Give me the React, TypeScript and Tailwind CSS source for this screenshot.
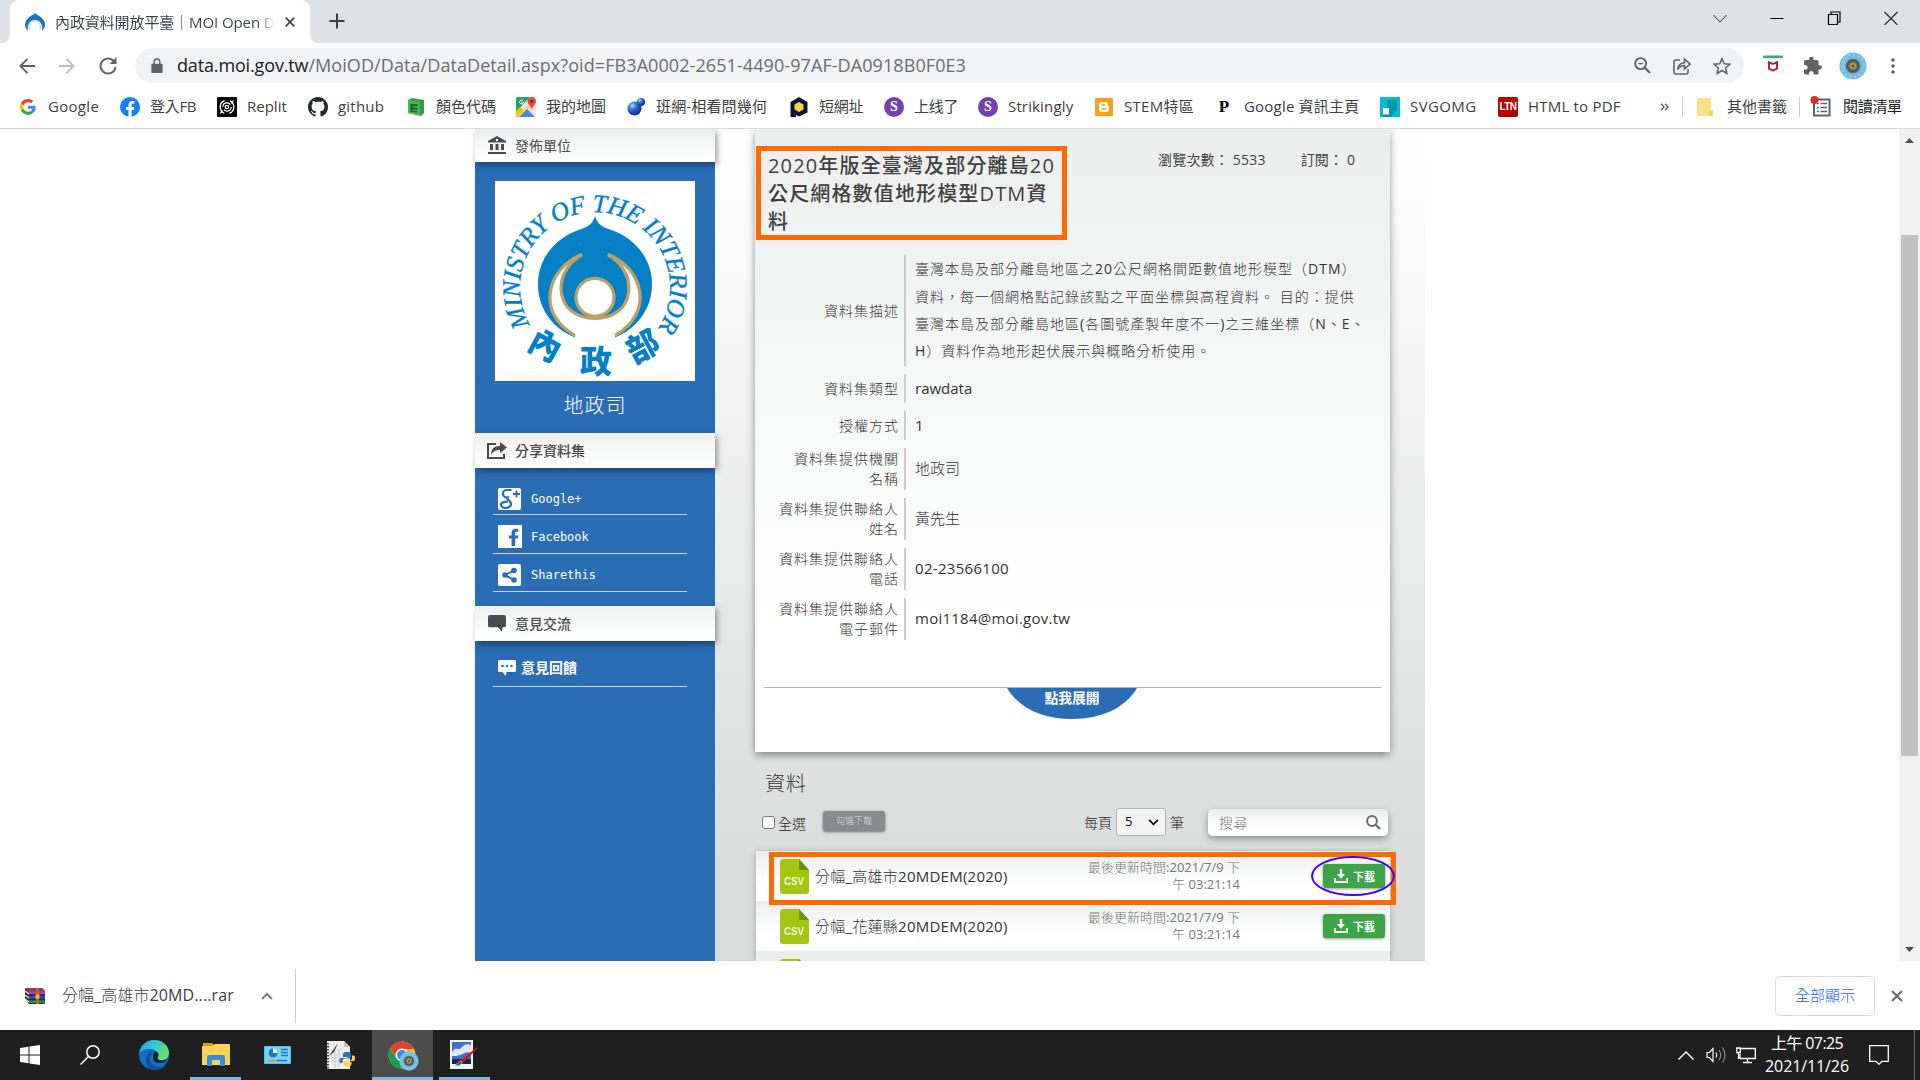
import React from "react";
import type { ReactNode } from "react";

type BookmarkItem = { label: string; slot: string; icon: ReactNode; text?: string };

const bookmarks: BookmarkItem[] = [
  { label: "Google", slot: "w-[102px]", icon: <GoogleIcon />, text: "tracking-[0.3px]" },
  { label: "登入FB", slot: "w-[97px]", icon: <FacebookRound />, text: "tracking-[-0.3px]" },
  { label: "Replit", slot: "w-[91px]", icon: <ReplitIcon /> },
  { label: "github", slot: "w-[98px]", icon: <GithubIcon />, text: "tracking-[0.2px]" },
  { label: "顏色代碼", slot: "w-[110px]", icon: <ColorCodeIcon /> },
  { label: "我的地圖", slot: "w-[110px]", icon: <MapsIcon /> },
  { label: "班網-相看問幾何", slot: "w-[163px]", icon: <BallIcon />, text: "tracking-[0.15px]" },
  { label: "短網址", slot: "w-[95px]", icon: <HexIcon />, text: "tracking-[-0.2px]" },
  { label: "上线了", slot: "w-[94px]", icon: <StrikinglyIcon />, text: "tracking-[-0.2px]" },
  { label: "Strikingly", slot: "w-[116px]", icon: <StrikinglyIcon />, text: "tracking-[0.15px]" },
  { label: "STEM特區", slot: "w-[120px]", icon: <BloggerIcon />, text: "tracking-[0.3px]" },
  { label: "Google 資訊主頁", slot: "w-[166px]", icon: <span className="font-['Liberation_Serif',serif] text-[17px] font-bold text-black">P</span>, text: "tracking-[0.2px]" },
  { label: "SVGOMG", slot: "w-[118px]", icon: <SvgomgIcon />, text: "tracking-[0.4px]" },
  { label: "HTML to PDF", slot: "w-[150px]", icon: <LtnIcon />, text: "tracking-[0.2px]" },
];

function GoogleIcon() {
  return (
    <svg viewBox="0 0 48 48" className="size-4">
      <path fill="#EA4335" d="M24 9.5c3.5 0 6.7 1.2 9.2 3.6l6.9-6.9C35.9 2.4 30.5 0 24 0 14.6 0 6.5 5.4 2.6 13.2l8 6.2C12.4 13.7 17.7 9.5 24 9.5z" />
      <path fill="#4285F4" d="M47 24.6c0-1.6-.2-3.100-.4-4.600H24v9h12.900c-.6 3-2.200 5.500-4.800 7.200l7.700 6C44.400 38 47 31.800 47 24.600z" />
      <path fill="#FBBC05" d="M10.500 28.600c-.5-1.500-.8-3-.8-4.600s.3-3.100.8-4.600l-8-6.200C.9 16.500 0 20.100 0 24s.9 7.500 2.600 10.800l7.900-6.200z" />
      <path fill="#34A853" d="M24 48c6.500 0 11.900-2.100 15.900-5.800l-7.700-6c-2.200 1.500-4.900 2.300-8.200 2.300-6.300 0-11.600-4.200-13.500-9.900l-8 6.200C6.500 42.600 14.600 48 24 48z" />
    </svg>
  );
}

function FacebookRound() {
  return (
    <svg viewBox="0 0 24 24" className="size-5">
      <circle cx="12" cy="12" r="12" fill="#0f83f3" />
      <path fill="#fff" d="M16.700 15.500l.5-3.500h-3.300V9.800c0-1 .5-1.900 2-1.900h1.500v-3s-1.400-.2-2.700-.2c-2.700 0-4.500 1.600-4.500 4.600V12h-3v3.500h3V24h3.700v-8.500z" />
    </svg>
  );
}

function ReplitIcon() {
  return (
    <svg viewBox="0 0 20 20" className="size-5">
      <rect width="20" height="20" rx="1" fill="#000" />
      <g fill="none" stroke="#fff" strokeWidth="1.300">
        <circle cx="10" cy="10" r="1.700" />
        <circle cx="10" cy="10" r="4.200" strokeDasharray="10 3.200" />
        <circle cx="10" cy="10" r="6.800" strokeDasharray="16 5.360" strokeDashoffset="8" />
        <path d="M14.500 6.500l2-3M5.500 13.500l-2 3" />
      </g>
    </svg>
  );
}

function GithubIcon() {
  return (
    <svg viewBox="0 0 16 16" className="size-5">
      <path fill="#24292f" d="M8 0C3.580 0 0 3.580 0 8c0 3.540 2.290 6.530 5.470 7.590.4.070.55-.17.55-.38 0-.19-.01-.82-.01-1.490-2.010.37-2.530-.49-2.690-.94-.09-.23-.48-.94-.82-1.130-.28-.15-.68-.52-.01-.53.63-.01 1.080.58 1.230.82.72 1.210 1.870.87 2.330.66.070-.52.28-.87.510-1.070-1.780-.2-3.640-.89-3.640-3.950 0-.87.310-1.590.82-2.150-.08-.2-.36-1.020.08-2.120 0 0 .67-.21 2.200.82.64-.18 1.320-.27 2-.27s1.360.09 2 .27c1.530-1.040 2.200-.82 2.200-.82.44 1.100.16 1.920.08 2.120.51.560.82 1.270.82 2.150 0 3.070-1.870 3.750-3.650 3.950.29.25.54.73.54 1.480 0 1.070-.01 1.930-.01 2.200 0 .21.15.46.55.38A8 8 0 0 0 16 8c0-4.420-3.580-8-8-8z" />
    </svg>
  );
}

function ColorCodeIcon() {
  return (
    <svg viewBox="0 0 18 18" className="h-[18px] w-[18px]">
      <path d="M1 2l4-2 12 2v13l-3 3-13-3z" fill="#2f9e44" />
      <path d="M1 2l12 2v13l-12-2z" fill="#4bb552" />
      <path d="M3.500 5.500l7 1v2l-5-.7v1.400l5 .7v2l-5-.7v1.300l5 .7v1.500l-7-1z" fill="#12652b" />
    </svg>
  );
}

function MapsIcon() {
  return (
    <svg viewBox="0 0 20 20" className="size-5">
      <rect width="20" height="20" rx="1.500" fill="#e6e6e6" />
      <path d="M0 1.500A1.500 1.500 0 0 1 1.500 0H14L0 15z" fill="#23a566" />
      <path d="M0 14l4-4 5 4-6 6H1.500A1.500 1.500 0 0 1 0 18.500z" fill="#f4c20d" />
      <path d="M2 19L14 6l2 2L5 20H2z" fill="#fbd65e" />
      <path d="M3 20L11 12l8 8z" fill="#4a86e8" />
      <path d="M15.500 0C18 0 20 2 20 4.300c0 3.200-3.500 4.500-4.300 8.700C15 8.800 11.500 7.500 11.500 4.300 11.500 2 13.200 0 15.500 0z" fill="#dd4b3e" />
      <circle cx="15.700" cy="4.300" r="1.400" fill="#7d1f18" />
      <path d="M7 3.500a2 2 0 1 0 .6 2H5.700" fill="none" stroke="#fff" strokeWidth="1" />
    </svg>
  );
}

function BallIcon() {
  return (
    <svg viewBox="0 0 20 20" className="size-5">
      <defs>
        <radialGradient id="ball" cx=".35" cy=".3" r=".7">
          <stop offset="0" stopColor="#b5d4ff" />
          <stop offset=".4" stopColor="#2f74e0" />
          <stop offset="1" stopColor="#0a2c86" />
        </radialGradient>
      </defs>
      <circle cx="8.500" cy="11.500" r="7" fill="url(#ball)" />
      <circle cx="15" cy="5" r="4" fill="url(#ball)" />
    </svg>
  );
}

function HexIcon() {
  return (
    <svg viewBox="0 0 20 20" className="size-5">
      <path d="M10 0l8.500 5v10.500L10 19.500l-3-1.500v2H1.500V5z" fill="#0e1530" />
      <path d="M10 5l4.500 2.600v5L10 15l-4.500-2.400v-5z" fill="#f3d34a" />
    </svg>
  );
}

function StrikinglyIcon() {
  return <span className="flex size-5 items-center justify-center rounded-full bg-[#7340b0] font-['Liberation_Serif',serif] text-[14px] leading-none font-bold text-white">S</span>;
}

function BloggerIcon() {
  return (
    <svg viewBox="0 0 18 18" className="h-[18px] w-[18px]">
      <rect width="18" height="18" rx="1" fill="#ff9f0f" />
      <path d="M7 4h3a2.700 2.700 0 0 1 2.700 2.700c0 1 .3 1.300 1.300 1.300v3a3 3 0 0 1-3 3H7a3 3 0 0 1-3-3V7a3 3 0 0 1 3-3z" fill="#fff" />
      <path d="M7 7h2.500M7 11h4" stroke="#ff9f0f" strokeWidth="1.400" strokeLinecap="round" />
    </svg>
  );
}

function SvgomgIcon() {
  return (
    <svg viewBox="0 0 20 20" className="size-5">
      <rect width="20" height="20" fill="#00bcd4" />
      <path d="M7 3h10v10l-7 7H3V11h4z" fill="#0097a7" />
      <rect x="3" y="11" width="6" height="6.500" fill="#fff" />
    </svg>
  );
}

function LtnIcon() {
  return <span className="flex h-5 w-5 items-center justify-center rounded-[2px] bg-[#b80000] font-['Liberation_Sans',sans-serif] text-[10px] leading-none font-bold tracking-[-0.5px] text-white">LTN</span>;
}

function Avatar({ className }: { className: string }) {
  return (
    <svg viewBox="0 0 28 28" className={className}>
      <circle cx="14" cy="14" r="13.500" fill="#71bdea" />
      <circle cx="14" cy="14" r="11" fill="none" stroke="#b9d9b6" strokeWidth="1.500" strokeDasharray="1.500 3.200" />
      <circle cx="14" cy="14" r="7.500" fill="#7a7350" />
      <circle cx="14" cy="14" r="5.500" fill="none" stroke="#33518d" strokeWidth="1.500" />
      <circle cx="14" cy="14" r="3" fill="#c59b3f" />
      <circle cx="14" cy="14" r="1.500" fill="#2b4a86" />
    </svg>
  );
}

function TabStrip() {
  return (
    <div className="flex h-[43px] bg-[#dee1e6]">
      <div className="flex w-[10px] items-end bg-white">
        <div className="h-full w-full rounded-br-[8px] bg-[#dee1e6]" />
      </div>
      <div className="flex w-[300px] items-center rounded-t-[9px] bg-white pt-[1px] pl-[15px]">
        <svg viewBox="0 0 20 18" className="h-[18px] w-5 shrink-0">
          <path d="M10 0c1 1.800 3 2 5 3.500 3 2 5 5 5 8 0 2.500-1 4.500-3 6.500.5-3 .3-5.500-1-7.500C15 8.500 13 7 10 7s-5 1.500-6 3.500C2.700 12.500 2.500 15 3 18c-2-2-3-4-3-6.500 0-3 2-6 5-8C7 2 9 1.800 10 0z" fill="#1b74bd" />
          <path d="M5 17c-1.500-6 1-9 5-9s6.500 3 5 9" fill="none" stroke="#b9d8ee" strokeWidth="1.200" />
        </svg>
        <div className="ml-[10px] w-[219px] overflow-hidden bg-gradient-to-r from-[#3c4043] from-[93%] to-transparent bg-clip-text text-[15px] tracking-[-0.1px] whitespace-nowrap text-transparent">
          內政資料開放平臺｜MOI Open D
        </div>
        <svg viewBox="0 0 10 10" className="ml-[11px] size-[10px] shrink-0">
          <path d="M.7.7l8.600 8.600M9.300.7L.7 9.300" stroke="#3c4043" strokeWidth="1.700" />
        </svg>
      </div>
      <div className="w-[10px] bg-white">
        <div className="h-full w-full rounded-bl-[8px] bg-[#dee1e6]" />
      </div>
      <svg viewBox="0 0 16 16" className="mt-[13px] ml-[9px] size-4">
        <path d="M8 .5v15M.5 8h15" stroke="#3c4043" strokeWidth="2" />
      </svg>
      <div className="mt-[11px] mr-[22px] ml-auto flex gap-[43px] text-black">
        <svg viewBox="0 0 14 14" className="size-[14px]"><path d="M.5 4l6.500 7 6.500-7" fill="none" stroke="#333" /></svg>
        <svg viewBox="0 0 14 14" className="size-[14px]"><path d="M.5 7.500h13" stroke="#000" /></svg>
        <svg viewBox="0 0 14 14" className="size-[14px]"><path d="M1.500 3.500h9v10h-9zM4 3.500v-2.500h9v10h-2.500" fill="none" stroke="#000" strokeWidth="1.200" /></svg>
        <svg viewBox="0 0 14 14" className="size-[14px]"><path d="M.5 1l13 13M13.500 1l-13 13" stroke="#222" strokeWidth="1.100" /></svg>
      </div>
    </div>
  );
}

function Toolbar() {
  return (
    <div className="flex h-[45px] items-center pl-[19px]">
      <svg viewBox="0 0 16 16" className="size-4" fill="none" stroke="#5f6368" strokeWidth="1.900"><path d="M16 8H1.500M8.500 .8L1.300 8l7.200 7.200" /></svg>
      <svg viewBox="0 0 16 16" className="ml-6 size-4" fill="none" stroke="#babcbe" strokeWidth="1.900"><path d="M0 8h14.500M7.500 .8L14.700 8l-7.200 7.200" /></svg>
      <svg viewBox="0 0 18 18" className="ml-6 size-[18px]" fill="none" stroke="#5f6368" strokeWidth="2"><path d="M15.500 5.200A7.500 7.500 0 1 0 16.500 10" /><path d="M17.500 0v7h-7z" fill="#5f6368" stroke="none" /></svg>
      <div className="ml-[18px] flex h-[35px] w-[1609px] items-center rounded-full bg-[#f1f3f4] pl-4">
        <svg viewBox="0 0 12 16" className="h-[15px] w-[12px]"><path d="M1.500 6H10.500A1.300 1.300 0 0 1 12 7.500v7a1.300 1.300 0 0 1-1.500 1.500h-9A1.300 1.300 0 0 1 0 14.500v-7A1.300 1.300 0 0 1 1.500 6z" fill="#5f6368" /><path d="M3 7V4a3 3 0 0 1 6 0v3" fill="none" stroke="#5f6368" strokeWidth="1.600" /></svg>
        <div className="ml-[14px] text-[18px] whitespace-nowrap text-[#6a6e72]"><span className="tracking-[-0.15px] text-[#202124]">data.moi.gov.tw</span><span className="tracking-[0.08px]">/MoiOD/Data/DataDetail.aspx?oid=FB3A0002-2651-4490-97AF-DA0918B0F0E3</span></div>
        <div className="mr-[13px] ml-auto flex items-center gap-[22px]">
          <svg viewBox="0 0 18 18" className="size-[17px]" fill="none" stroke="#5f6368" strokeWidth="2"><circle cx="7" cy="7" r="5.800" /><path d="M11 11l6 6" strokeWidth="2.300" /><path d="M4.500 7h5" strokeWidth="1.500" /></svg>
          <svg viewBox="0 0 18 18" className="size-[18px]" fill="none" stroke="#5f6368" strokeWidth="1.600"><path d="M7 3H3a2 2 0 0 0-2 2v10a2 2 0 0 0 2 2h10a2 2 0 0 0 2-2v-3" /><path d="M4.500 12.500c.5-4 3-6.500 7-6.800V2l5.500 5-5.500 5V8.500c-3 0-5 1-7 4z" /></svg>
          <svg viewBox="0 0 18 18" className="size-[18px]" fill="none" stroke="#5f6368" strokeWidth="1.500"><path d="M9 1.500l2.200 5.200 5.600.5-4.200 3.700 1.200 5.500L9 13.500l-4.800 2.900 1.200-5.500L1.200 7.200l5.600-.5z" /></svg>
        </div>
      </div>
      <svg viewBox="0 0 20 20" className="mt-[-4px] ml-[19px] size-5"><rect y="1.500" width="20" height="2.700" rx="1.300" fill="#3da58a" /><path d="M6 8.200v6.500l4 1.800 4-1.800V8.200L10 10z" fill="none" stroke="#c01818" strokeWidth="1.900" /></svg>
      <svg viewBox="2 1.500 21 21" className="ml-[21px] size-[18px]"><path fill="#5f6368" d="M20.500 11H19V7c0-1.100-.9-2-2-2h-4V3.500a2.500 2.500 0 0 0-5 0V5H4c-1.100 0-1.990.9-1.990 2v3.800H3.500c1.490 0 2.700 1.210 2.700 2.700s-1.210 2.700-2.700 2.700H2V20c0 1.100.9 2 2 2h3.800v-1.500c0-1.490 1.210-2.700 2.700-2.700s2.700 1.210 2.700 2.700V22H17c1.100 0 2-.9 2-2v-4h1.500a2.500 2.500 0 0 0 0-5z" /></svg>
      <Avatar className="ml-[17px] size-[28px]" />
      <svg viewBox="0 0 4 18" className="ml-6 h-[18px] w-1" fill="#5f6368"><circle cx="2" cy="3" r="1.800" /><circle cx="2" cy="9" r="1.800" /><circle cx="2" cy="15" r="1.800" /></svg>
    </div>
  );
}

function BookmarksBar() {
  return (
    <div className="flex h-[41px] items-center border-b border-[#dadce0] pb-[3px] pl-[18px] text-[15px] whitespace-nowrap text-[#3c4043]">
      {bookmarks.map((b) => (
        <div key={b.label} className={`flex shrink-0 items-center ${b.slot}`}>
          <span className="flex size-5 shrink-0 items-center justify-center">{b.icon}</span>
          <span className={`ml-[10px] pb-px ${b.text ?? ""}`}>{b.label}</span>
        </div>
      ))}
      <svg viewBox="0 0 9 8" className="mr-[13px] ml-[12px] h-2 w-[9px]" fill="none" stroke="#5f6368" strokeWidth="1.500"><path d="M1 .8L4 4 1 7.200M5 .8L8 4 5 7.200" /></svg>
      <div className="h-5 w-px bg-[#c8cacd]" />
      <svg viewBox="0 0 16 18" className="ml-[14px] h-[18px] w-4"><path d="M0 1a1 1 0 0 1 1-1h13v13l2 1v4H1a1 1 0 0 1-1-1z" fill="#ffe08a" /><path d="M11.500 18v-4L16 12v5.500z" fill="#f7cc55" /></svg>
      <span className="ml-[14px] pb-px">其他書籤</span>
      <div className="ml-3 h-5 w-px bg-[#c8cacd]" />
      <svg viewBox="0 0 22 22" className="ml-[10px] size-[22px]"><path d="M4 3.500h15.500v16H4z" fill="none" stroke="#5f6368" strokeWidth="2" /><path d="M7 7.500h2M10.500 7.500H17M7 11.500h2M10.500 11.500H17M7 15.500h2M10.500 15.500H17" stroke="#5f6368" strokeWidth="1.500" /><circle cx="4.500" cy="4" r="4" fill="#d93025" /></svg>
      <span className="ml-[11px] pb-px text-[#202124] tracking-[-0.3px]">閱讀清單</span>
    </div>
  );
}

function SideHeader({ icon, children, height, bold }: { icon: ReactNode; children: string; height: string; bold?: boolean }) {
  return (
    <div className={`relative z-10 flex shrink-0 items-center bg-gradient-to-b from-[#eef0f0] to-white shadow-[2px_3px_6px_rgba(0,0,0,0.4)] ${height}`}>
      <span className="flex w-10 justify-center pl-[3px]">{icon}</span>
      <span className={`pb-px text-[14px] text-[#4a4a4f] ${bold ? "font-medium" : ""}`}>{children}</span>
    </div>
  );
}

function MinistrySeal() {
  return (
    <svg viewBox="0 0 200 200" className="mx-auto block size-[200px] bg-white">
      <path d="M100 35c2.500 8 7 11 15 13.500C138 56 157 76 157 103c0 26-16 45-37 53.500H80C59 148 43 129 43 103c0-27 19-47 42-54.500 8-2.500 12.500-5.500 15-13.500z" fill="#0680c4" />
      <path d="M87 73.500C52 87 40 132 80 154.500V158h40v-3.500C160 132 148 87 113 73.500C145 92 140 137.500 100 137.500S55 92 87 73.500z" fill="#fff" />
      <path d="M87 73.500C52 87 40 132 80 154.500M113 73.500c35 13.500 47 58 7 81" fill="none" stroke="#bea066" strokeWidth="3.200" />
      <path d="M87 73.500C55 92 60 137.500 100 137.500S145 92 113 73.500" fill="none" stroke="#bea066" strokeWidth="3.200" />
      <circle cx="100" cy="116.300" r="19" fill="#fff" stroke="#bea066" strokeWidth="3.200" />
      <path id="seal-arc" d="M35 143.500A75 75 0 1 1 166 142" fill="none" />
      <text fill="#0680c4" stroke="#0680c4" strokeWidth="0.400" fontFamily="'Liberation Serif', serif" fontStyle="italic" fontSize="25.500">
        <textPath href="#seal-arc" textLength="318" lengthAdjust="spacing">MINISTRY OF THE INTERIOR</textPath>
      </text>
      <g fill="#0680c4" fontFamily="'Noto Sans CJK TC', sans-serif" fontWeight="900" fontSize="32" textAnchor="middle">
        <text transform="translate(50 165) rotate(28)" y="11">內</text>
        <text transform="translate(101 180)" y="12">政</text>
        <text transform="translate(148 166) rotate(-28)" y="11">部</text>
      </g>
    </svg>
  );
}

function Sidebar() {
  const row = "mx-[18px] mr-[28px] flex items-center border-b border-[#cbd3db] pl-[5px] font-['DejaVu_Sans_Mono',monospace] text-[12px] text-white";
  return (
    <aside className="flex w-[240px] flex-col bg-[#2a6db5]">
      <SideHeader height="h-[33px]" icon={<svg viewBox="0 0 18 18" className="size-[18px] -translate-y-px" fill="#4a4a4f"><path d="M9 0l9 5v1.500H0V5zM2 8h3v6H2zM7.500 8h3v6h-3zM13 8h3v6h-3zM0 16h18v2H0z" /><circle cx="9" cy="4" r="1.200" fill="#fff" /></svg>}>發佈單位</SideHeader>
      <div className="h-[271px] pt-[19px]">
        <MinistrySeal />
        <div className="mt-[10px] text-center font-['Open_Sans','Noto_Sans_CJK_TC_Light','Noto_Sans_CJK_TC',sans-serif] text-[20px] tracking-[1px] text-white">地政司</div>
      </div>
      <SideHeader bold height="h-[35px]" icon={<svg viewBox="0 0 20 17" className="h-[17px] w-5" fill="#4a4a4f"><path d="M9 2H1v14h16v-4" fill="none" stroke="#4a4a4f" strokeWidth="2" /><path d="M4 13c0-6 3-9 9-9V0l7 5.500-7 5.500V8c-4 0-7 1-9 5z" /></svg>}>分享資料集</SideHeader>
      <div className="h-[138px] pt-[13px]">
        <div className={`${row} h-[34px] pt-[2px]`}>
          <svg viewBox="0 0 23 22" className="h-[22px] w-[23px]"><rect width="23" height="22" rx="2" fill="#fff" /><path d="M13.500 2H8a3.800 3.800 0 1 0 1.500 7.500c-1 2 3.500 3 3.500 6.500 0 5-10 5-10 1 0-3 4-3.500 7-3.300" fill="none" stroke="#2a6db5" strokeWidth="2.200" /><path d="M18.500 2.500v7M15 6h7" stroke="#2a6db5" strokeWidth="1.800" /></svg>
          <span className="ml-[10px]">Google+</span>
        </div>
        <div className={`${row} h-[39px] pt-[5px]`}>
          <svg viewBox="0 0 23 22" className="h-[23px] w-[24px]"><rect width="23" height="22" rx="1" fill="#fff" /><path d="M13 20v-7h-2.500v-3H13V8c0-3 1.500-4.500 4-4.500h2.500v3H18c-1.200 0-1.500.6-1.500 1.700V10h3l-.5 3h-2.500v7z" fill="#2a6db5" /></svg>
          <span className="ml-[9px]">Facebook</span>
        </div>
        <div className={`${row} h-[38px] pt-1`}>
          <svg viewBox="0 0 23 22" className="h-[22px] w-[23px]"><rect width="23" height="22" rx="2" fill="#fff" /><path d="M16 6.500L7 11l9 5" fill="none" stroke="#2a6db5" strokeWidth="2" /><circle cx="16" cy="6.500" r="2.800" fill="#2a6db5" /><circle cx="7" cy="11" r="2.800" fill="#2a6db5" /><circle cx="16" cy="16" r="2.800" fill="#2a6db5" /></svg>
          <span className="ml-[10px]">Sharethis</span>
        </div>
      </div>
      <SideHeader bold height="h-[35px]" icon={<svg viewBox="0 0 19 18" className="h-[17px] w-[18px]" fill="#4a4a4f"><path d="M2 0h15a2 2 0 0 1 2 2v9a2 2 0 0 1-2 2h-1.500l-1 4.500L10.500 13H2a2 2 0 0 1-2-2V2a2 2 0 0 1 2-2z" /></svg>}>意見交流</SideHeader>
      <div className="mx-[18px] mr-[28px] flex h-[46px] items-center border-b border-[#cbd3db] pt-2 pl-[5px] text-[14px] font-bold text-white">
        <svg viewBox="0 0 18 16" className="h-4 w-[18px]"><path d="M1.500 0h15A1.500 1.500 0 0 1 18 1.500v9a1.500 1.500 0 0 1-1.500 1.500H8.500L7.500 16l-3-4h-3A1.500 1.500 0 0 1 0 10.500v-9A1.500 1.500 0 0 1 1.500 0z" fill="#fff" /><g fill="#2a6db5"><circle cx="4.500" cy="6" r="1.300" /><circle cx="9" cy="6" r="1.300" /><circle cx="13.500" cy="6" r="1.300" /></g></svg>
        <span className="ml-[5px]">意見回饋</span>
      </div>
    </aside>
  );
}

function Field({ label, children, height, desc }: { label: string; children: ReactNode; height: string; desc?: boolean }) {
  return (
    <div className={`flex shrink-0 items-center ${height}`}>
      <div className="w-[144px] pl-5 text-right text-[14px] leading-5 tracking-[1px] whitespace-pre-line">{label}</div>
      <div className="ml-[5px] w-[2px] self-stretch bg-[#cccccc]" />
      <div className={`ml-[9px] pb-px whitespace-nowrap ${desc ? "text-[14px] leading-[27.400px] tracking-[1px]" : "text-[15px]"}`}>{children}</div>
    </div>
  );
}

function DetailCard() {
  return (
    <section className="relative h-[623px] w-[635px] bg-gradient-to-b from-[#edefef] to-white to-80% shadow-[0_3px_8px_rgba(0,0,0,0.4)]">
      <div className="flex h-[126px] pt-[17px] pl-px">
        <h1 className="h-[94px] w-[311px] border-[5px] border-[#ff6a00] pt-px pl-[7px] text-[20px] leading-7 font-medium tracking-[1.150px] whitespace-nowrap text-[#3f3f3f]">
          2020年版全臺灣及部分離島20<br />公尺網格數值地形模型DTM資<br />料
        </h1>
        <div className="mt-[2px] ml-[91px] text-[14px] leading-6 tracking-[0.2px] whitespace-nowrap text-[#3f3f3f]">瀏覽次數： 5533<span className="ml-[35px]">訂閱： 0</span></div>
      </div>
      <div className="flex flex-col gap-2 font-['Open_Sans','Noto_Sans_CJK_TC_Light','Noto_Sans_CJK_TC',sans-serif] text-[#333]">
        <Field label="資料集描述" height="h-[111px]" desc>
          臺灣本島及部分離島地區之20公尺網格間距數值地形模型（DTM）<br />資料，每一個網格點記錄該點之平面坐標與高程資料。 目的：提供<br />臺灣本島及部分離島地區(各圖號產製年度不一)之三維坐標（N、E、<br />H）資料作為地形起伏展示與概略分析使用。
        </Field>
        <Field label="資料集類型" height="h-[29px]">rawdata</Field>
        <Field label="授權方式" height="h-[29px]">1</Field>
        <Field label={"資料集提供機關\n名稱"} height="h-[42px]">地政司</Field>
        <Field label="資料集提供聯絡人姓名" height="h-[42px]">黃先生</Field>
        <Field label="資料集提供聯絡人電話" height="h-[42px]"><span className="tracking-[0.3px]">02-23566100</span></Field>
        <Field label="資料集提供聯絡人電子郵件" height="h-[42px]"><span className="tracking-[0.25px]">moi1184@moi.gov.tw</span></Field>
      </div>
      <div className="mx-[9px] mt-[47px] border-t border-[#b0b0b0]">
        <div className="mx-auto flex h-[31px] w-[130px] -translate-x-px justify-center overflow-hidden">
          <svg viewBox="0 0 132 31" preserveAspectRatio="none" className="h-[31px] w-[130px] shrink-0"><path d="M0 0C12 20 36 31 66 31s54-11 66-31z" fill="#2a6db5" /><text x="66" y="15" textAnchor="middle" fontSize="14" fontWeight="700" fill="#fff" fontFamily="'Open Sans','Noto Sans CJK TC',sans-serif">點我展開</text></svg>
        </div>
      </div>
    </section>
  );
}

function Toolrow() {
  return (
    <div className="flex h-[30px] items-center font-['Open_Sans','Noto_Sans_CJK_TC_Light','Noto_Sans_CJK_TC',sans-serif] text-[14px] text-[#222]">
      <span className="ml-[7px] size-[13px] rounded-[3px] border border-[#767676] bg-white" />
      <span className="mt-[3px] ml-[3px]">全選</span>
      <span className="-mt-[3px] ml-[17px] h-5 w-[62px] rounded-[3px] bg-[#888a8b] text-center text-[9px] leading-5 text-[#dedede] shadow-[0_1px_3px_rgba(0,0,0,0.5)]">勾選下載</span>
      <span className="ml-[199px]">每頁</span>
      <span className="ml-1 flex h-7 w-[50px] items-center justify-between rounded-[3px] border border-[#b5b5b5] bg-[#f4f4f4] pr-1.5 pl-[8px] text-[13px] text-black">
        5
        <svg viewBox="0 0 12 8" className="h-[7px] w-[11px]"><path d="M1 1l5 5 5-5" fill="none" stroke="#000" strokeWidth="2" /></svg>
      </span>
      <span className="ml-1">筆</span>
      <span className="ml-[24px] flex h-[27px] w-[180px] items-center rounded-[5px] bg-gradient-to-b from-[#eceeed] to-white to-70% px-[11px] pr-[7px] text-[#777] shadow-[0_3px_7px_rgba(0,0,0,0.35)]">
        <span>搜尋</span>
        <svg viewBox="0 0 15 15" className="ml-auto size-[15px]" fill="none" stroke="#6a6d6c" strokeWidth="2"><circle cx="6" cy="6" r="4.900" /><path d="M9.500 9.500l4.500 4.500" strokeWidth="2.400" /></svg>
      </span>
    </div>
  );
}

function CsvIcon() {
  return (
    <svg viewBox="0 0 29 35" className="h-[35px] w-[29px]">
      <path d="M3 0h16l10 11v21a3 3 0 0 1-3 3H3a3 3 0 0 1-3-3V3a3 3 0 0 1 3-3z" fill="#a3c614" />
      <path d="M19 0l10 11H19z" fill="#738f12" />
      <text x="14" y="25.500" textAnchor="middle" fontSize="10.500" fontWeight="700" fill="#f4f8da" fontFamily="'Liberation Sans',sans-serif" textLength="20" lengthAdjust="spacingAndGlyphs">CSV</text>
    </svg>
  );
}

function FileFold() {
  return (
    <svg viewBox="0 0 29 2" className="h-[2px] w-[29px]">
      <path d="M2 0h17l2 2H0z" fill="#a3c614" />
      <path d="M19 0l2 2h-2z" fill="#738f12" />
    </svg>
  );
}

function FileRow({ name }: { name: string }) {
  return (
    <div className="flex h-[50px] shrink-0 items-start bg-gradient-to-b from-[#eceeed] to-white to-70% pl-6 font-['Open_Sans','Noto_Sans_CJK_TC_Light','Noto_Sans_CJK_TC',sans-serif]">
      <div className="mt-2"><CsvIcon /></div>
      <div className="mt-[15px] ml-[6px] w-[200px] text-[15px] leading-5 tracking-[0.25px] whitespace-nowrap text-[#333]">{name}</div>
      <div className="mt-[8px] ml-[45px] w-[180px] text-right text-[13px] leading-[17px] whitespace-nowrap text-[#777]">最後更新時間:2021/7/9 下<br />午 03:21:14</div>
      <div className="mt-[13px] ml-[83px] flex h-6 w-[62px] items-center rounded-[3px] bg-[#3da548] pl-[11px] font-['Noto_Sans_CJK_TC',sans-serif] text-[11px] font-bold text-white shadow-[0_1px_3px_rgba(0,0,0,0.4)]">
        <svg viewBox="0 0 14 14" className="size-[14px]" fill="none" stroke="#fff" strokeWidth="2"><path d="M7 0v6" strokeWidth="2.500" /><path d="M3 5h8l-4 5z" fill="#fff" stroke="none" /><path d="M1 9v4h12V9" strokeWidth="1.800" /></svg>
        <span className="ml-[5px]">下載</span>
      </div>
    </div>
  );
}

function DataList() {
  return (
    <div className="relative mt-[14px] w-[634px] shadow-[0_1px_6px_rgba(0,0,0,0.25)]">
      <FileRow name="分幅_高雄市20MDEM(2020)" />
      <FileRow name="分幅_花蓮縣20MDEM(2020)" />
      <div className="h-[10px] bg-[#eceeed] pt-[8px] pl-6"><FileFold /></div>
      <div className="absolute top-px left-[13px] h-[53px] w-[627px] border-[5px] border-[#ff6a00]" />
      <div className="absolute top-[5px] left-[555px] h-[40px] w-[84px] rounded-[50%] border-[2.500px] border-[#4400ff]" />
    </div>
  );
}

function PageArea() {
  return (
    <main className="flex h-[832px] overflow-hidden bg-white">
      <div className="flex w-[950px] ml-[475px] bg-gradient-to-b from-white to-[#dadcdb] to-90%">
        <Sidebar />
        <div className="ml-10">
          <DetailCard />
          <h2 className="mt-[17px] ml-[10px] font-['Open_Sans','Noto_Sans_CJK_TC_Light','Noto_Sans_CJK_TC',sans-serif] text-[20px] leading-[30px] tracking-[1px] text-[#333]">資料</h2>
          <div className="mt-[8px]"><Toolrow /></div>
          <div className="ml-px"><DataList /></div>
        </div>
      </div>
      <div className="ml-auto flex w-[21px] flex-col items-center justify-between bg-[#f1f1f1] py-[9px]">
        <svg viewBox="0 0 9 5" className="h-[5px] w-[9px]"><path d="M0 5L4.500 0 9 5z" fill="#505050" /></svg>
        <div className="mt-[92px] mb-auto h-[521px] w-[17px] bg-[#c1c1c1]" />
        <svg viewBox="0 0 9 5" className="h-[5px] w-[9px]"><path d="M0 0l4.500 5L9 0z" fill="#505050" /></svg>
      </div>
    </main>
  );
}

function DownloadShelf() {
  return (
    <div className="flex h-[69px] items-center bg-white pl-[25px] font-['Open_Sans','Noto_Sans_CJK_TC_Light','Noto_Sans_CJK_TC',sans-serif]">
      <svg viewBox="0 0 20 16" className="h-[16px] w-5 shrink-0">
        <path d="M1 0h16l3 3v13H4L0 11V1z" fill="#333" />
        <path d="M1 0h16l3 3.500v1.500H4L1 2z" fill="#8a3a5a" />
        <path d="M4 3.500h16V6H4z" fill="#c23a9c" /><path d="M4 8h16v2.500H4z" fill="#2746d8" /><path d="M4 12.500h16V15H4z" fill="#1f9a3c" />
        <path d="M0 3l4 3M0 7l4 3M0 11l4 3" stroke="#eee" strokeWidth="1.200" />
        <path d="M11 0h3v16h-3z" fill="#a86c2c" /><rect x="10.500" y="6.500" width="4" height="4" fill="#e5b94a" />
      </svg>
      <div className="ml-[17px] w-[172px] pb-[2px] text-[16px] tracking-[0.1px] whitespace-nowrap text-[#3c4043]">分幅_高雄市20MD....rar</div>
      <svg viewBox="0 0 12 8" className="ml-[27px] h-2 w-[12px]"><path d="M1 7l5-5 5 5" fill="none" stroke="#7a7e82" strokeWidth="2" /></svg>
      <div className="ml-[22px] h-[54px] w-px bg-[#c8cacd]" />
      <div className="ml-auto flex h-10 w-[100px] items-center justify-center rounded-[5px] border border-[#dadce0] text-[15px] text-[#1a62e8]">全部顯示</div>
      <svg viewBox="0 0 12 12" className="mr-[17px] ml-4 size-[12px]"><path d="M1 1l10 10M11 1L1 11" stroke="#6a6e72" strokeWidth="2.200" /></svg>
    </div>
  );
}

function ChromeLogo() {
  return (
    <svg viewBox="0 0 28 28" className="size-[28px]">
      <circle cx="14" cy="14" r="13.500" fill="#fbc116" />
      <path d="M14 .5A13.500 13.500 0 0 0 2.300 7.200L8.500 17 14 8h11.900A13.500 13.500 0 0 0 14 .5z" fill="#db4437" />
      <path d="M2.300 7.200A13.500 13.500 0 0 0 13 27.500L19 17H8z" fill="#1a9e54" />
      <circle cx="14" cy="14" r="6.500" fill="#fff" /><circle cx="14" cy="14" r="5" fill="#4285f4" />
    </svg>
  );
}

function Taskbar() {
  return (
    <footer className="flex h-[50px] items-stretch bg-[#1f1f1f]">
      <div className="flex w-[60px] items-center justify-center"><svg viewBox="0 0 20 20" className="size-5" fill="#fff"><path d="M0 3l8.500-1.200v7.700H0zM9.500 1.600L20 0v9.500H9.500zM0 10.500h8.500v7.700L0 17zM9.500 10.500H20V20L9.500 18.400z" /></svg></div>
      <div className="flex w-[60px] items-center justify-center"><svg viewBox="0 0 20 20" className="size-5" fill="none" stroke="#fff" strokeWidth="1.500"><circle cx="13" cy="7" r="6.200" /><path d="M8.500 11.500L.5 19.500" /></svg></div>
      <div className="flex w-[68px] items-center justify-center">
        <svg viewBox="0 0 30 30" className="size-[30px]">
          <defs><linearGradient id="edgeTop" x1="0" y1="0" x2="1" y2=".4"><stop offset="0" stopColor="#1f9be8" /><stop offset=".5" stopColor="#35c1d8" /><stop offset="1" stopColor="#66e06e" /></linearGradient></defs>
          <circle cx="15" cy="15" r="15" fill="#0e6fc9" />
          <path d="M0 14C1 5 8 0 15 0c9 0 15 6 15 13 0 5-4 7-8 7-3 0-4-1-4-2 0-.8 1-1.200 1-3.500C19 11 15 9 11 9 5 9 1 11 0 14z" fill="url(#edgeTop)" />
          <path d="M12 15c-3 7 3 12 9 12 2 0 4-.5 6-2-3 4-7 5-12 5C9 30 6 24 7 19c1-5 4-7 7-7.500-1 1-1.500 2-2 3.500z" fill="#164f97" />
          <path d="M15 12c3-1 5 1 4.500 3.500-.3 1.500-1.500 2-1 3.300 1 2 6.500 2.500 10 .7-1 2.500-5 4-8.500 3.500-4 0-8-3-5-11z" fill="#1f1f1f" />
        </svg>
      </div>
      <div className="mr-[2px] flex w-[55px] flex-col items-center justify-end">
        <svg viewBox="0 0 28 24" className="mb-[11px] h-[24px] w-[28px]"><path d="M1 1h9l3 3v4H1z" fill="#e0a010" /><path d="M0 4h10l3-2h14a1 1 0 0 1 1 1v20H0z" fill="#ffd257" /><path d="M5 24v-9a2 2 0 0 1 2-2h14a2 2 0 0 1 2 2v9h-5v-6h-8v6z" fill="#3590d8" /></svg>
        <div className="h-[3px] w-[51px] bg-[#76b9ed]" />
      </div>
      <div className="flex w-[63px] items-center justify-center pl-[2px]">
        <svg viewBox="0 0 27 18" className="h-[18px] w-[27px]"><rect width="27" height="18" rx="1" fill="#55bdf0" /><rect x="1" y="1" width="25" height="16" fill="#7fd2f7" /><circle cx="9" cy="7" r="4.500" fill="#1777c9" /><path d="M9 2.500v4.500h4.500A4.500 4.500 0 0 0 9 2.500z" fill="#fff" /><path d="M17 3.500h7M17 6.500h7M17 9.500h7M13 14.500h10" stroke="#1777c9" strokeWidth="1.500" /><path d="M4 14.500h9" stroke="#e88b1c" strokeWidth="1.500" /></svg>
      </div>
      <div className="flex w-[64px] items-center justify-center">
        <svg viewBox="0 0 29 29" className="size-[29px]"><path d="M1 0h17l6 6v22H1z" fill="#ececec" /><path d="M18 0v6h6z" fill="#bbb" /><path d="M2 2v26" stroke="#555" strokeWidth="2" strokeDasharray="1.500 1.500" /><path d="M5 14h17M5 17h14M5 20h12M9 5v22M13 8v18" stroke="#c9c9c9" strokeWidth=".7" /><path d="M3 15L12 2l-4 9z" fill="#333" /><path d="M21 11c-4 0-4 1.500-4 3v2h4.500v1H15c-2 0-2.500 5 0 5h1.500v-2c0-1.500 1-2.500 2.500-2.500h4c1.200 0 2-1 2-2V13c0-1.500-1-2-4-2z" fill="#3572a5" /><path d="M21.500 25.500c4 0 4-1.500 4-3v-1.500H21v-1h6.500c2 0 2-5.500 0-5.500H26V17c0 1.500-1 2.500-2.500 2.500H19.500c-1.200 0-2 1-2 2V23c0 1.500 1 2.500 4 2.500z" fill="#ffd445" /></svg>
      </div>
      <div className="flex w-[61px] flex-col items-center justify-end bg-[#4c4c4c]">
        <div className="relative mr-[2px] mb-[8px]"><ChromeLogo /><Avatar className="absolute top-[10px] left-[11px] size-[20px]" /></div>
        <div className="h-[3px] w-full bg-[#76b9ed]" />
      </div>
      <div className="ml-[6px] flex w-[51px] flex-col items-center justify-end">
        <svg viewBox="0 0 30 29" className="mr-[3px] mb-[8px] h-[29px] w-[30px]"><path d="M2 0h23v29H2z" fill="#f2f2f2" /><path d="M4 2h19v22H4z" fill="#3f74c4" /><path d="M4 12c4-6 6-1 9-4s5-5 10-3v8c-6-3-9 4-19 3z" fill="#dce8f8" /><path d="M4 19h19v5H4z" fill="#152a5c" /><path d="M29 8L13 21l-1 2 2-.5z" fill="#c4161c" stroke="#c4161c" strokeWidth="1.500" /><path d="M13 21c-3 0-3 3-6 4 3 2 7 0 7-3z" fill="#555" stroke="#ddd" strokeWidth=".6" /></svg>
        <div className="h-[3px] w-full bg-[#76b9ed]" />
      </div>
      <div className="ml-auto flex items-center text-white">
        <svg viewBox="0 0 16 9" className="h-[9px] w-4" fill="none" stroke="#fff" strokeWidth="1.400"><path d="M.5 8.500L8 1l7.500 7.500" /></svg>
        <svg viewBox="0 0 21 18" className="ml-[12px] h-[18px] w-[21px]" fill="none" stroke="#fff" strokeWidth="1.200"><path d="M1 6.500h2.500L7 2.500v13L3.500 11.500H1z" /><path d="M10 6.500q1.500 2.500 0 5" /><path d="M13 4q3.500 5 0 10M16.500 1.500q5 7.500 0 15" stroke="#888" /></svg>
        <svg viewBox="0 0 20 17" className="ml-[9px] h-[17px] w-5" fill="none" stroke="#fff" strokeWidth="1.300"><path d="M5 1.500h14.300v10H4V7M11.500 11.500v4M7 15.500h9M.7 1h3.600v4.500H.7zM2.500 5.500V12" /></svg>
        <div className="ml-[9px] flex w-[84px] flex-col text-center text-[16px] leading-[23px] whitespace-nowrap"><span className="tracking-[-0.6px]">上午 07:25</span><span className="tracking-[-0.1px]">2021/11/26</span></div>
        <svg viewBox="0 0 20 20" className="ml-5 size-5" fill="none" stroke="#fff" strokeWidth="1.300"><path d="M.7.7h18.600v15.600H13l-3 3-3-3H.7z" /></svg>
        <div className="mr-[5px] ml-[25px] h-[50px] w-px bg-[#6a6a6a]" />
      </div>
    </footer>
  );
}

export default function App() {
  return (
    <div className="flex h-[1080px] w-[1920px] flex-col overflow-hidden bg-white font-['Open_Sans','Noto_Sans_CJK_TC',sans-serif]">
      <TabStrip />
      <Toolbar />
      <BookmarksBar />
      <PageArea />
      <DownloadShelf />
      <Taskbar />
    </div>
  );
}
